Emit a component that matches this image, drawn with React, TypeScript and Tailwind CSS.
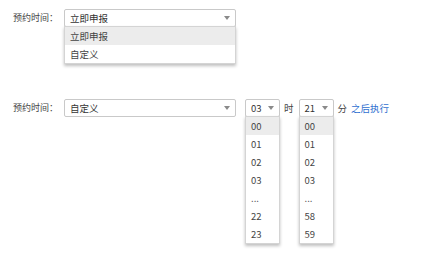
const font = {fontFamily: '"Noto Sans CJK SC", "Noto Sans", sans-serif'};

const Caret: React.FC = () => (
	<span className="ml-auto mr-[5px] w-0 h-0 border-l-[3.5px] border-r-[3.5px] border-t-[4px] border-l-transparent border-r-transparent border-t-[#8a8a8a]" />
);

const Select: React.FC<{value: string; className: string}> = ({value, className}) => (
	<div
		className={`flex items-center h-[18px] pl-[5px] border border-[#c9c9c9] rounded-[2px] bg-white text-[9.5px] text-[#333] ${className}`}
	>
		<span>{value}</span>
		<Caret />
	</div>
);

const Menu: React.FC<{items: string[]; className: string}> = ({items, className}) => (
	<ul
		className={`absolute top-[17px] left-0 bg-white border border-[#d4d4d4] shadow-[0_2px_3px_rgba(0,0,0,0.25)] text-[9.5px] text-[#444] ${className}`}
	>
		{items.map((item, idx) => (
			<li
				key={item + idx}
				className={`flex items-center h-[18px] pl-[5px] ${idx === 0 ? "bg-[#ececec]" : ""}`}
			>
				{item}
			</li>
		))}
	</ul>
);

export default function App() {
	return (
		<div className="w-[440px] h-[264px] bg-white pl-[13px] pt-[9px]" style={font}>
			<div className="flex items-center">
				<span className="w-[51px] text-[9px] text-[#444]">预约时间：</span>

				<div className="relative">
					<Select value="立即申报" className="w-[172px]" />
					<Menu items={["立即申报", "自定义"]} className="w-[172px]" />
				</div>
			</div>

			<div className="flex items-center mt-[72px] text-[9.5px] text-[#444]">
				<span className="w-[51px] text-[9px]">预约时间：</span>

				<Select value="自定义" className="w-[172px]" />

				<div className="relative ml-[9px]">
					<Select value="03" className="w-[35px]" />
					<Menu
						items={["00", "01", "02", "03", "...", "22", "23"]}
						className="w-[35px] !pl-0"
					/>
				</div>
				<span className="ml-[4px]">时</span>

				<div className="relative ml-[5px]">
					<Select value="21" className="w-[35px]" />
					<Menu
						items={["00", "01", "02", "03", "...", "58", "59"]}
						className="w-[35px]"
					/>
				</div>
				<span className="ml-[4px]">分</span>

				<span className="ml-[4px] text-[#2f6fd0]">之后执行</span>
			</div>
		</div>
	);
}
